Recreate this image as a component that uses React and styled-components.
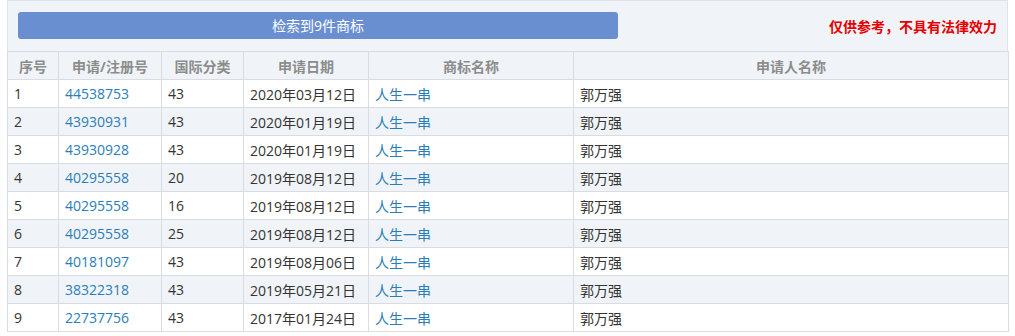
import styled, { createGlobalStyle } from "styled-components";

const GlobalStyle = createGlobalStyle`
  body {
    margin: 0;
    background: #ffffff;
    font-family: "Open Sans", "Noto Sans CJK SC", sans-serif;
    font-size: 14px;
  }
`;

const rows = [
  ["1", "44538753", "43", "2020年03月12日"],
  ["2", "43930931", "43", "2020年01月19日"],
  ["3", "43930928", "43", "2020年01月19日"],
  ["4", "40295558", "20", "2019年08月12日"],
  ["5", "40295558", "16", "2019年08月12日"],
  ["6", "40295558", "25", "2019年08月12日"],
  ["7", "40181097", "43", "2019年08月06日"],
  ["8", "38322318", "43", "2019年05月21日"],
  ["9", "22737756", "43", "2017年01月24日"],
];

const widths = [51, 103, 82, 125, 205, 435];

const App = () => {
  return (
    <>
      <GlobalStyle />
      <Wrapper>
        <TopBar>
          <SearchButton>检索到9件商标</SearchButton>
          <Notice>仅供参考，不具有法律效力</Notice>
        </TopBar>
        <Table>
          <colgroup>
            {widths.map((w, i) => (
              <col key={i} style={{ width: w }} />
            ))}
          </colgroup>
          <thead>
            <tr>
              <Th>序号</Th>
              <Th>申请/注册号</Th>
              <Th>国际分类</Th>
              <Th>申请日期</Th>
              <Th>商标名称</Th>
              <Th>申请人名称</Th>
            </tr>
          </thead>
          <tbody>
            {rows.map((r, i) => (
              <Row key={i} $striped={i % 2 === 1}>
                <Td>{r[0]}</Td>
                <Td>
                  <Link>{r[1]}</Link>
                </Td>
                <Td>{r[2]}</Td>
                <Td>{r[3]}</Td>
                <Td>
                  <Link>人生一串</Link>
                </Td>
                <Td>郭万强</Td>
              </Row>
            ))}
          </tbody>
        </Table>
      </Wrapper>
    </>
  );
};

const Wrapper = styled.div`
  margin-left: 7px;
  width: 1001px;
`;

const TopBar = styled.div`
  box-sizing: border-box;
  height: 51px;
  background: #f0f4f8;
  border: 1px solid #dfe4ea;
  border-bottom: none;
  display: flex;
  align-items: center;
  justify-content: space-between;
  padding: 0 10px 0 10px;
`;

const SearchButton = styled.div`
  width: 600px;
  height: 27px;
  margin-top: -2px;
  background: #6a8fd1;
  border-radius: 3px;
  color: #ffffff;
  font-size: 14px;
  display: flex;
  align-items: center;
  justify-content: center;
`;

const Notice = styled.div`
  color: #e60000;
  font-weight: bold;
  font-size: 14px;
  margin-top: -1px;
`;

const Table = styled.table`
  width: 1001px;
  border-collapse: collapse;
  table-layout: fixed;
`;

const Th = styled.th`
  height: 27px;
  padding: 0;
  border: 1px solid #d9dde3;
  background: #f0f4f8;
  color: #8c8c8c;
  font-weight: bold;
  font-size: 14px;
  text-align: center;
`;

const Row = styled.tr`
  background: ${({ $striped }) => ($striped ? "#f0f4f8" : "#ffffff")};
`;

const Td = styled.td`
  height: 27px;
  padding: 0 6px;
  border: 1px solid #d9dde3;
  color: #333333;
  font-size: 14px;
  white-space: nowrap;
`;

const Link = styled.span`
  color: #2a7db8;
`;

export default App;
